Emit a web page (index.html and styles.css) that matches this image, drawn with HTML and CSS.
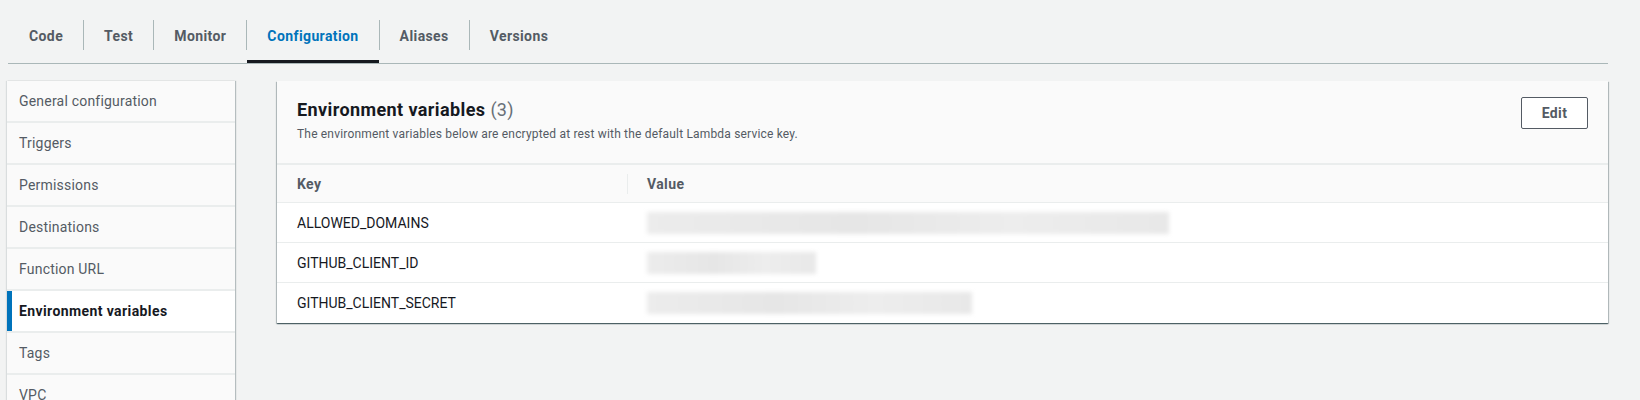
FILE: index.html
```html
<!DOCTYPE html>
<html lang="en">
<head>
<meta charset="utf-8">
<title>Configuration</title>
<link rel="stylesheet" href="styles.css">
</head>
<body>
<div class="page">
  <nav class="tabs">
    <a class="tab">Code</a><span class="sep"></span>
    <a class="tab">Test</a><span class="sep"></span>
    <a class="tab">Monitor</a><span class="sep"></span>
    <a class="tab active">Configuration</a><span class="sep"></span>
    <a class="tab">Aliases</a><span class="sep"></span>
    <a class="tab">Versions</a>
  </nav>
  <div class="main">
    <ul class="side">
      <li class="side-item">General configuration</li>
      <li class="side-item">Triggers</li>
      <li class="side-item">Permissions</li>
      <li class="side-item">Destinations</li>
      <li class="side-item">Function URL</li>
      <li class="side-item active">Environment variables</li>
      <li class="side-item">Tags</li>
      <li class="side-item">VPC</li>
    </ul>
    <section class="panel">
      <header class="panel-head">
        <div class="head-text">
          <h2 class="title">Environment variables <span class="count">(3)</span></h2>
          <p class="desc">The environment variables below are encrypted at rest with the default Lambda service key.</p>
        </div>
        <button class="btn">Edit</button>
      </header>
      <div class="table">
        <div class="row head">
          <div class="cell">Key</div>
          <div class="cell val"><span class="divider"></span>Value</div>
        </div>
        <div class="row">
          <div class="cell">ALLOWED_DOMAINS</div>
          <div class="cell val"><span class="blur" style="width:522px"></span></div>
        </div>
        <div class="row">
          <div class="cell">GITHUB_CLIENT_ID</div>
          <div class="cell val"><span class="blur" style="width:169px"></span></div>
        </div>
        <div class="row last">
          <div class="cell">GITHUB_CLIENT_SECRET</div>
          <div class="cell val"><span class="blur" style="width:325px"></span></div>
        </div>
      </div>
    </section>
  </div>
</div>
</body>
</html>
```

FILE: styles.css
```css
* { box-sizing: border-box; }
html, body { margin: 0; padding: 0; }
body {
  background: #f2f3f3;
  font-family: Roboto, "Liberation Sans", Arial, sans-serif;
  color: #16191f;
  font-size: 14px;
  height: 400px;
  overflow: hidden;
}
.page { padding: 10px 32px 0 8px; }

.tabs {
  display: flex;
  border-bottom: 1px solid #aab7b8;
}
.tab {
  height: 53px;
  padding: 2px 20px 1px;
  display: flex;
  align-items: center;
  font-weight: 700;
  font-size: 14px;
  letter-spacing: 0.4px;
  color: #545b64;
  border-bottom: 3px solid transparent;
}
.tab:first-child { padding-left: 21px; }
.tab.active { color: #0073bb; border-bottom-color: #16191f; }
.sep {
  width: 1px;
  height: 30px;
  margin-top: 10px;
  background: #aab7b8;
}

.main {
  display: flex;
  align-items: flex-start;
  margin-top: 17px;
}

.side {
  list-style: none;
  margin: 0 0 0 -1px;
  padding: 0;
  width: 228px;
  flex: none;
  background: #eaeded;
  box-shadow: 1px 0 1px 0 rgba(0, 28, 36, 0.25), -1px 0 1px 0 rgba(0, 28, 36, 0.1);
}
.side-item {
  height: 40px;
  margin-bottom: 2px;
  background: #fafafa;
  display: flex;
  align-items: center;
  padding-left: 12px;
  color: #545b64;
  font-size: 14px;
  letter-spacing: 0.2px;
}
.side-item.active {
  background: #fff;
  color: #16191f;
  font-weight: 700;
  letter-spacing: 0.4px;
  border-left: 5px solid #0073bb;
  padding-left: 7px;
}

.panel {
  flex: 1;
  margin-left: 42px;
  background: #fff;
  box-shadow: 0 1px 1px 0 rgba(0, 28, 36, 0.5), 1px 1px 1px 0 rgba(0, 28, 36, 0.2), -1px 1px 1px 0 rgba(0, 28, 36, 0.2);
}
.panel-head {
  display: flex;
  justify-content: space-between;
  align-items: flex-start;
  background: #fafafa;
  padding: 18px 20px 21px;
  border-bottom: 2px solid #eaeded;
}
.title {
  margin: 0;
  font-size: 18px;
  line-height: 22px;
  font-weight: 700;
  letter-spacing: 0.4px;
  color: #16191f;
}
.count { font-weight: 400; color: #687078; letter-spacing: 0.3px; }
.desc {
  margin: 5px 0 0;
  font-size: 12px;
  line-height: 16px;
  letter-spacing: 0.18px;
  color: #545b64;
}
.btn {
  margin-top: -2px;
  width: 67px;
  height: 32px;
  background: #fff;
  border: 1px solid #545b64;
  border-radius: 2px;
  font-family: inherit;
  font-weight: 700;
  font-size: 14px;
  letter-spacing: 0.4px;
  color: #545b64;
}

.row {
  display: grid;
  grid-template-columns: 350px 1fr;
  height: 40px;
  border-bottom: 1px solid #eaeded;
}
.row.head {
  height: 38px;
  background: #fafafa;
  color: #545b64;
  font-weight: 700;
  letter-spacing: 0.4px;
}
.row.last { border-bottom: 0; }
.cell {
  display: flex;
  align-items: center;
  padding-left: 20px;
}
.val { position: relative; padding-left: 20px; }
.divider {
  position: absolute;
  left: 0;
  top: 9px;
  width: 1px;
  height: 20px;
  background: #eaeded;
}
.blur {
  display: block;
  height: 22px;
  background: linear-gradient(90deg, #ececec, #e6e6e6 40%, #ededed 70%, #e8e8e8);
  filter: blur(2px);
}
```
